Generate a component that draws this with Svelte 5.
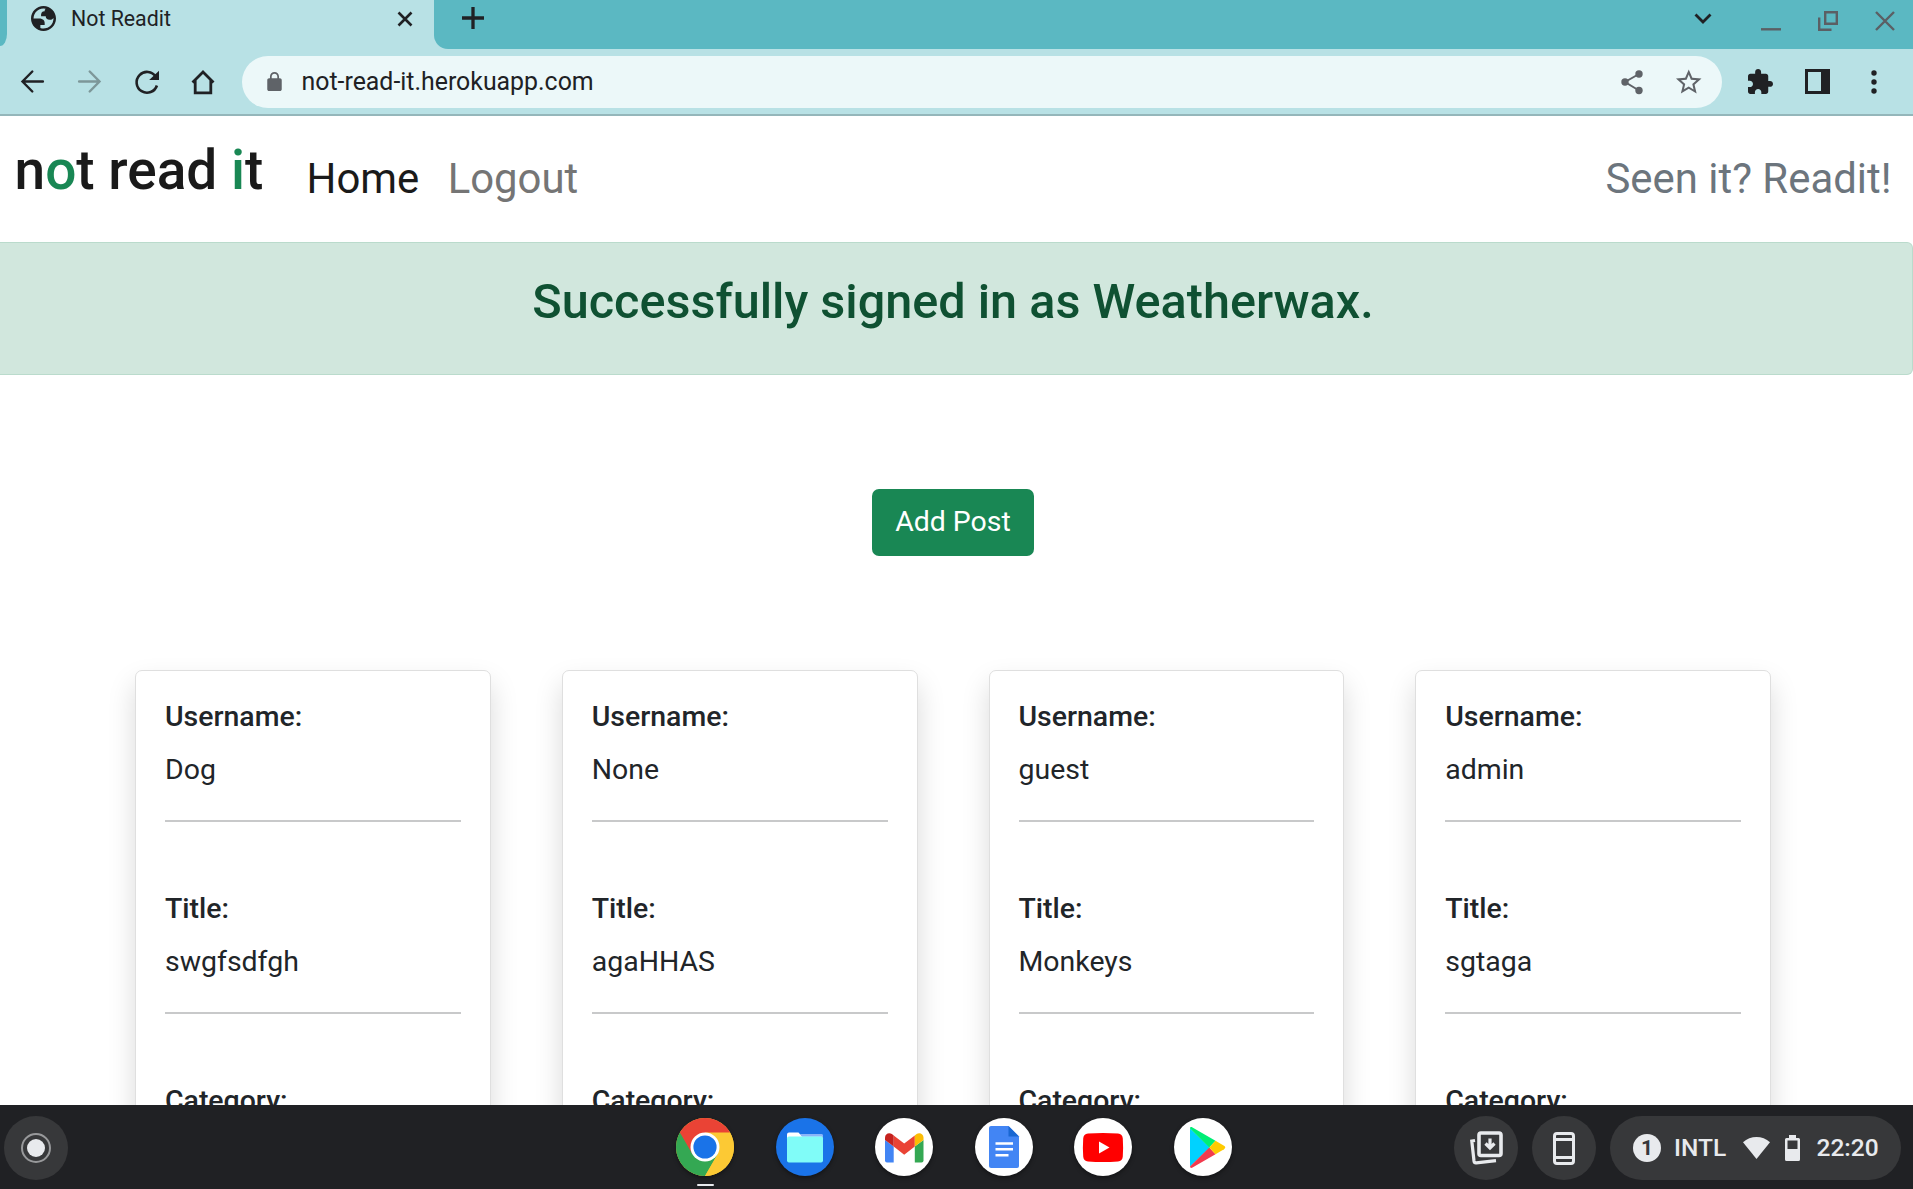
<script lang="ts">
  const posts = [
    { username: 'Dog', title: 'swgfsdfgh' },
    { username: 'None', title: 'agaHHAS' },
    { username: 'guest', title: 'Monkeys' },
    { username: 'admin', title: 'sgtaga' },
  ];
</script>

<div class="screen">
  <header class="tabstrip">
    <div class="prev-tab"></div>
    <div class="tab">
      <svg class="favicon" viewBox="2 2 20 20"><path fill-rule="evenodd" d="M12 2C6.480 2 2 6.480 2 12s4.480 10 10 10 10-4.480 10-10S17.520 2 12 2zM4 12h4.400c3.407.022 4.922 1.730 4.543 5.127H9.488v2.470a8.004 8.004 0 0 0 10.498-8.083C19.327 12.504 18.332 13 17 13c-2.137 0-3.206-.916-3.206-2.750h-3.748c-.274-2.728.683-4.092 2.870-4.092 0-.975.327-1.597.811-1.970A8.004 8.004 0 0 0 4 12z" /></svg>
      <span class="tab-title">Not Readit</span>
      <svg class="tab-close" viewBox="0 0 16 16"><path d="M1.500 1.500l13 13M14.500 1.500l-13 13" /></svg>
    </div>
    <div class="strip-rest">
      <svg class="plus" viewBox="0 0 22 22"><path d="M11 0v22M0 11h22" /></svg>
      <svg class="chevron" viewBox="0 0 18 12"><path d="M1.500 1.500L9 9l7.500-7.500" /></svg>
      <svg class="minimize" viewBox="0 0 20 20"><path d="M0 18.300h20" /></svg>
      <svg class="restore" viewBox="0 0 20 20"><path d="M7.200 1.200h11.600v11.600H7.200zM1.200 6.500V18.800h12.300" /></svg>
      <svg class="win-close" viewBox="0 0 20 20"><path d="M1 1l18 18M19 1L1 19" /></svg>
    </div>
  </header>

  <div class="toolbar">
    <svg class="tb arrow back" viewBox="0 0 23 23"><path d="M21.900 11.500H1.800M11.300 1.500L1.500 11.500l9.800 10" /></svg>
    <svg class="tb arrow forward" viewBox="0 0 23 23"><path d="M1.100 11.500h20.100M11.700 1.500l9.800 10-9.800 10" /></svg>
    <svg class="tb reload" viewBox="0 0 24 24"><path d="M20.800 6.800A10.400 10.400 0 1 0 21.900 15.500" /><path class="tip" d="M24 .8V10H14.200z" /></svg>
    <svg class="tb home" viewBox="0 0 24 24"><path d="M1.500 12.500L12 2l10.500 10.500M4.200 10.500v12.300h15.600V10.500" /></svg>
    <div class="omnibox">
      <svg class="lock" viewBox="4 1 16 21"><path d="M18 8h-1V6c0-2.760-2.240-5-5-5S7 3.240 7 6v2H6c-1.100 0-2 .9-2 2v10c0 1.100.9 2 2 2h12c1.100 0 2-.9 2-2V10c0-1.100-.9-2-2-2zM8.900 6c0-1.710 1.390-3.100 3.100-3.100s3.100 1.390 3.100 3.100v2H8.900V6z" /></svg>
      <span class="url">not-read-it.herokuapp.com</span>
      <svg class="share" viewBox="0 0 22 24"><path d="M18 4L4 12l14 8.500" /><circle cx="18" cy="4" r="3.700" /><circle cx="4" cy="12" r="3.700" /><circle cx="18" cy="20.500" r="3.700" /></svg>
      <svg class="star" viewBox="2 2 20 19"><path d="M22 9.240l-7.190-.62L12 2 9.190 8.630 2 9.240l5.460 4.730L5.820 21 12 17.270 18.180 21l-1.630-7.030L22 9.240zM12 15.400l-3.760 2.270 1-4.280-3.320-2.880 4.380-.38L12 6.100l1.710 4.040 4.380.38-3.320 2.880 1 4.280L12 15.400z" /></svg>
    </div>
    <svg class="puzzle" viewBox="2 1 21 21"><path d="M20.500 11H19V7c0-1.100-.9-2-2-2h-4V3.500C13 2.120 11.880 1 10.500 1S8 2.120 8 3.500V5H4c-1.100 0-1.990.9-1.990 2v3.800H3.500c1.490 0 2.700 1.210 2.700 2.700s-1.210 2.700-2.700 2.700H2V20c0 1.100.9 2 2 2h3.800v-1.500c0-1.490 1.210-2.700 2.700-2.700 1.490 0 2.700 1.210 2.700 2.700V22H17c1.100 0 2-.9 2-2v-4h1.500c1.380 0 2.500-1.120 2.500-2.500S21.880 11 20.500 11z" /></svg>
    <svg class="sidepanel" viewBox="0 0 25 25"><path fill-rule="evenodd" d="M0 0h25v25H0zM3 3v19h13V3z" /></svg>
    <svg class="dots" viewBox="0 0 6 24"><circle cx="3" cy="3" r="2.700" /><circle cx="3" cy="12" r="2.700" /><circle cx="3" cy="21" r="2.700" /></svg>
  </div>

  <main class="page">
    <nav class="navbar">
      <span class="brand">n<b>o</b>t read <b>i</b>t</span>
      <a class="nav-link active" href="#home">Home</a>
      <a class="nav-link" href="#logout">Logout</a>
      <span class="tagline">Seen it? Readit!</span>
    </nav>
    <div class="alert">Successfully signed in as Weatherwax.</div>
    <button class="add-post">Add Post</button>
    <section class="cards">
      {#each posts as post}
        <article class="card">
          <div class="field">
            <h6>Username:</h6>
            <p>{post.username}</p>
          </div>
          <div class="field">
            <h6>Title:</h6>
            <p>{post.title}</p>
          </div>
          <div class="field">
            <h6>Category:</h6>
            <p></p>
          </div>
        </article>
      {/each}
    </section>
  </main>

  <footer class="shelf">
    <div class="launcher">
      <svg viewBox="0 0 30 30"><circle cx="15" cy="15" r="14" fill="none" stroke="#98999b" stroke-width="2" /><circle cx="15" cy="15" r="9" fill="#e8eaed" /></svg>
    </div>

    <div class="apps">
      <div class="app running">
        <svg viewBox="0 0 58 58">
          <circle cx="29" cy="29" r="29" fill="#fcc934" />
          <path d="M29 29L3.900 14.500A29 29 0 0 1 54.100 14.500z" fill="#ea4335" />
          <path d="M3.900 14.500A29 29 0 0 0 29 58L41.600 36.200 29 29z" fill="#34a853" />
          <path d="M3.900 14.500L16.500 36.200 29 29V14.500z" fill="#ea4335" />
          <path d="M29 14.500h25.100A29 29 0 0 1 29 58l12.600-21.800z" fill="#fcc934" />
          <circle cx="29" cy="29" r="14.500" fill="#fff" />
          <circle cx="29" cy="29" r="11.600" fill="#1a73e8" />
        </svg>
      </div>
      <div class="app">
        <svg viewBox="0 0 58 58">
          <circle cx="29" cy="29" r="29" fill="#1a73e8" />
          <path d="M22 16h23a2 2 0 0 1 2 2v6H22z" fill="#8ab4f8" />
          <path d="M13 14.500h9.500L26 18.500h20V25H11v-8.500a2 2 0 0 1 2-2z" fill="#fff" />
          <path d="M22.500 14.500L26 18.500h21V18a2 2 0 0 0-2-2H24z" fill="#8ab4f8" />
          <rect x="11" y="18.500" width="36" height="26" rx="2" fill="#80fcf8" />
        </svg>
      </div>
      <div class="app">
        <svg viewBox="0 0 58 58">
          <circle cx="29" cy="29" r="29" fill="#fff" />
          <path d="M10 22l8.700 6.500V44.500H12a2 2 0 0 1-2-2z" fill="#4285f4" />
          <path d="M48.500 22l-8.700 6.500V44.500h6.700a2 2 0 0 0 2-2z" fill="#34a853" />
          <path d="M18.700 17.500l10.500 8 10.600-8v11l-10.600 8.300-10.500-8.300z" fill="#ea4335" />
          <path d="M39.800 17.500l1.800-1.400c2.900-2.200 6.900-.2 6.900 3.400V22l-8.700 6.500z" fill="#fbbc04" />
          <path d="M10 22v-2.500c0-3.600 4-5.600 6.900-3.400l1.800 1.400v11z" fill="#c5221f" />
        </svg>
      </div>
      <div class="app">
        <svg viewBox="0 0 58 58">
          <circle cx="29" cy="29" r="29" fill="#fff" />
          <path d="M16 8h17.500L44 18.500V48a2 2 0 0 1-2 2H16a2 2 0 0 1-2-2V10a2 2 0 0 1 2-2z" fill="#4285f4" />
          <path d="M33.500 8L44 18.500H33.500z" fill="#1967d2" />
          <path d="M20.500 25.500h17.500M20.500 31.300h17.500M20.500 37.200h13" stroke="#fff" stroke-width="2.400" />
        </svg>
      </div>
      <div class="app">
        <svg viewBox="0 0 58 58">
          <circle cx="29" cy="29" r="29" fill="#fff" />
          <path d="M14 15.600Q29 14.600 44 15.600Q48.500 16 48.800 20.500Q49.400 29.500 48.800 38.500Q48.500 43 44 43.400Q29 44.400 14 43.400Q9.500 43 9.200 38.500Q8.600 29.500 9.200 20.500Q9.500 16 14 15.600z" fill="#f00" />
          <path d="M25 23.500v12L35.500 29.500z" fill="#fff" />
        </svg>
      </div>
      <div class="app">
        <svg viewBox="0 0 58 58">
          <circle cx="29" cy="29" r="29" fill="#fff" />
          <path d="M16 10.500L36 29.500 16 48.500z" fill="#00d2ff" />
          <path d="M16 10.500c0-1.500 1.300-1.700 2.500-1L41.500 22.800 35.300 29.500z" fill="#00ee76" />
          <path d="M16 48.500c0 1.500 1.300 1.700 2.500 1L41.500 36.200 35.300 29.500z" fill="#f23b4e" />
          <path d="M41.500 22.800l8.500 5q2.500 1.700 0 3.400l-8.500 5-6.200-6.700z" fill="#ffcb00" />
        </svg>
      </div>
    </div>

    <div class="tray-button">
      <svg class="holding" viewBox="0 0 33 34"><rect x="9" y="2" width="22" height="22.500" rx="2" fill="none" stroke="#e8eaed" stroke-width="3.600" /><path d="M5 9.500L1.800 10l2.200 20q.3 2 2.300 1.800L26 29.600" fill="none" stroke="#e8eaed" stroke-width="3.200" /><path d="M20 7.500v8M15.500 12.500l4.500 4.500 4.500-4.500" fill="none" stroke="#e8eaed" stroke-width="3.200" /></svg>
    </div>
    <div class="tray-button">
      <svg class="phone" viewBox="0 0 22 33"><rect x="1.500" y="1.500" width="19" height="30" rx="2.500" fill="none" stroke="#e8eaed" stroke-width="3" /><path d="M2 7.500h18M2 25.500h18" stroke="#e8eaed" stroke-width="3" /></svg>
    </div>
    <div class="status">
      <span class="count">1</span>
      <span class="ime">INTL</span>
      <svg class="wifi" viewBox="0 0 27 22"><path d="M0 5.200C7.500-1.700 19.500-1.700 27 5.200L13.500 22z" /></svg>
      <svg class="battery" viewBox="0 0 15 26"><path fill-rule="evenodd" d="M4 0h7v3h2.500Q15 3 15 4.500v20q0 1.500-1.500 1.500h-12Q0 26 0 24.500v-20Q0 3 1.500 3H4zM2.500 5.500V14h10V5.500z" /></svg>
      <span class="clock">22:20</span>
    </div>
  </footer>
</div>

<style>
  :global(body) {
    margin: 0;
    overflow: hidden;
  }
  .screen {
    width: 1913px;
    height: 1189px;
    display: flex;
    flex-direction: column;
    overflow: hidden;
    background: #fff;
    font-family: Roboto, 'Liberation Sans', sans-serif;
    color: #202124;
  }
  svg {
    display: block;
    flex: none;
    overflow: visible;
  }

  /* Tab strip */
  .tabstrip {
    flex: none;
    height: 49px;
    display: flex;
    background: #b8e1e5;
  }
  .prev-tab {
    width: 7px;
    height: 46px;
    background: #5bb8c2;
    border-bottom-right-radius: 8px 14px;
  }
  .tab {
    width: 427px;
    height: 37px;
    display: flex;
    align-items: center;
  }
  .favicon {
    width: 25px;
    height: 25px;
    margin-left: 24px;
    fill: #202124;
  }
  .tab-title {
    margin-left: 15px;
    font-size: 21.330px;
    line-height: 35px;
    margin-bottom: 1px;
  }
  .tab-close {
    width: 16px;
    height: 16px;
    margin-left: auto;
    margin-right: 21px;
    stroke: #202124;
    stroke-width: 2.600;
  }
  .strip-rest {
    flex: 1;
    display: flex;
    background: #5bb8c2;
    border-bottom-left-radius: 14px;
    stroke: #5b5f64;
    stroke-width: 2.400;
  }
  .strip-rest svg {
    fill: none;
  }
  .plus {
    width: 22px;
    height: 22px;
    margin: 7px 0 0 28px;
    stroke: #202124;
    stroke-width: 3.300;
  }
  .chevron {
    width: 18px;
    height: 12px;
    margin: 13px 1px 0 auto;
    stroke: #202124;
    stroke-width: 2.800;
  }
  .minimize,
  .restore,
  .win-close {
    width: 20px;
    height: 20px;
    margin-top: 11px;
  }
  .minimize {
    margin-left: 48px;
  }
  .restore {
    margin-left: 37px;
  }
  .win-close {
    margin: 11px 18px 0 37px;
  }

  /* Toolbar */
  .toolbar {
    flex: none;
    height: 65px;
    display: flex;
    align-items: center;
    background: #b8e1e5;
    border-bottom: 2px solid #94b6ba;
  }
  .tb {
    width: 23px;
    height: 23px;
    fill: none;
    stroke: #202124;
    stroke-width: 2.600;
  }
  .arrow {
    stroke-width: 2.400;
    stroke-linecap: round;
  }
  .back {
    margin-left: 20.500px;
  }
  .forward {
    margin-left: 34px;
    stroke: #7d9799;
  }
  .reload {
    width: 24px;
    height: 24px;
    margin-left: 34px;
  }
  .reload .tip {
    fill: #202124;
    stroke: none;
  }
  .home {
    width: 24px;
    height: 24px;
    margin-left: 32.500px;
    stroke-width: 2.800;
  }
  .omnibox {
    width: 1480px;
    height: 52px;
    margin-left: 27px;
    display: flex;
    align-items: center;
    border-radius: 26px;
    background: #ecf8f9;
  }
  .lock {
    width: 15px;
    height: 19px;
    margin-left: 24.500px;
    fill: #5f6368;
  }
  .url {
    margin-left: 20px;
    font-size: 24.890px;
    line-height: 36px;
  }
  .share {
    width: 22px;
    height: 24px;
    margin-left: auto;
    margin-right: 33px;
    fill: none;
    stroke: #5f6368;
    stroke-width: 2;
  }
  .share circle {
    fill: #5f6368;
    stroke: none;
  }
  .star {
    width: 25.500px;
    height: 25px;
    margin-right: 20.500px;
    fill: #5f6368;
  }
  .puzzle {
    width: 25px;
    height: 25px;
    margin-left: 26px;
    fill: #202124;
  }
  .sidepanel {
    width: 25px;
    height: 25px;
    margin-left: 32px;
    fill: #202124;
  }
  .dots {
    width: 6px;
    height: 24px;
    margin-left: 41px;
    fill: #202124;
  }

  /* Page */
  .page {
    flex: 1;
    min-height: 0;
    overflow: hidden;
    color: #212529;
  }
  .navbar {
    height: 126px;
    display: flex;
    align-items: flex-start;
    color: #1a1a1a;
    white-space: pre;
  }
  .brand {
    margin: 24px 0 0 14.500px;
    width: 292px;
    box-sizing: border-box;
    font-size: 55px;
    font-weight: 500;
    line-height: 60px;
  }
  .brand b {
    font-weight: 500;
    color: #198754;
  }
  .nav-link {
    margin: 33px 28.400px 0 0;
    font-size: 41.900px;
    line-height: 60px;
    color: #757575;
    text-decoration: none;
  }
  .nav-link.active {
    color: #1a1a1a;
  }
  .tagline {
    margin: 33px 21.500px 0 auto;
    font-size: 41.900px;
    line-height: 60px;
    color: #6c757d;
  }
  .alert {
    height: 133px;
    box-sizing: border-box;
    padding: 29px 6px 0 0;
    border: 1px solid #badbcc;
    border-left: 0;
    border-radius: 0 6px 6px 0;
    background: #d1e7dd;
    color: #0f5132;
    font-size: 48.580px;
    font-weight: 500;
    line-height: 60px;
    text-align: center;
  }
  .add-post {
    display: block;
    width: 162px;
    height: 67px;
    margin: 114px 0 0 872px;
    padding: 0 0 2px;
    border: 0;
    border-radius: 7px;
    background: #198754;
    color: #fff;
    font-family: inherit;
    font-size: 28.440px;
  }
  .cards {
    display: grid;
    grid-template-columns: repeat(4, 1fr);
    gap: 71px;
    width: 1636px;
    margin: 114px 0 0 135px;
  }
  .card {
    box-sizing: border-box;
    height: 700px;
    padding: 29px 29px 28px;
    border: 1px solid #dfdfdf;
    border-radius: 7px;
    background: #fff;
    box-shadow: 0 14px 28px rgba(0, 0, 0, 0.15);
  }
  .field {
    margin-bottom: 70px;
    padding-bottom: 29px;
    border-bottom: 2px solid #c8c9ca;
    font-size: 28.440px;
  }
  h6 {
    margin: 0 0 14px;
    font-size: inherit;
    font-weight: 500;
    line-height: 34px;
  }
  p {
    margin: 0;
    height: 43px;
    line-height: 43px;
  }

  /* Shelf */
  .shelf {
    flex: none;
    height: 84px;
    display: flex;
    align-items: center;
    background: #202124;
    color: #e8eaed;
  }
  .launcher,
  .tray-button {
    width: 64px;
    height: 64px;
    margin-top: 2px;
    display: flex;
    align-items: center;
    justify-content: center;
    border-radius: 50%;
    background: #37383a;
  }
  .launcher {
    margin-left: 4px;
  }
  .launcher svg {
    width: 30px;
    height: 30px;
  }
  .apps {
    display: flex;
    gap: 41.600px;
    margin-left: 608px;
    margin-right: auto;
  }
  .app {
    position: relative;
    width: 58px;
    height: 58px;
    border-radius: 50%;
    box-shadow: 0 2px 4px rgba(0, 0, 0, 0.4);
  }
  .running::after {
    content: '';
    position: absolute;
    left: 21px;
    top: 66px;
    width: 17px;
    height: 2px;
    border-radius: 1px;
    background: #e8eaed;
  }
  .tray-button {
    margin-right: 14px;
  }
  .holding {
    width: 33px;
    height: 34px;
  }
  .phone {
    width: 22px;
    height: 33px;
  }
  .status {
    width: 291px;
    height: 64px;
    margin: 1px 12px 0 0;
    display: flex;
    align-items: center;
    border-radius: 32px;
    background: #37383a;
    font-size: 24.500px;
    font-weight: 500;
  }
  .status svg {
    fill: #e8eaed;
  }
  .count {
    width: 28px;
    height: 28px;
    margin-left: 23px;
    border-radius: 50%;
    background: #e8eaed;
    color: #37383a;
    font-size: 21px;
    font-weight: 700;
    line-height: 28px;
    text-align: center;
  }
  .ime {
    width: 67px;
    margin-left: 13px;
  }
  .wifi {
    width: 27px;
    height: 22px;
    margin-left: 2px;
  }
  .battery {
    width: 15px;
    height: 26px;
    margin-left: 15px;
  }
  .clock {
    margin-left: 16.500px;
  }
</style>
